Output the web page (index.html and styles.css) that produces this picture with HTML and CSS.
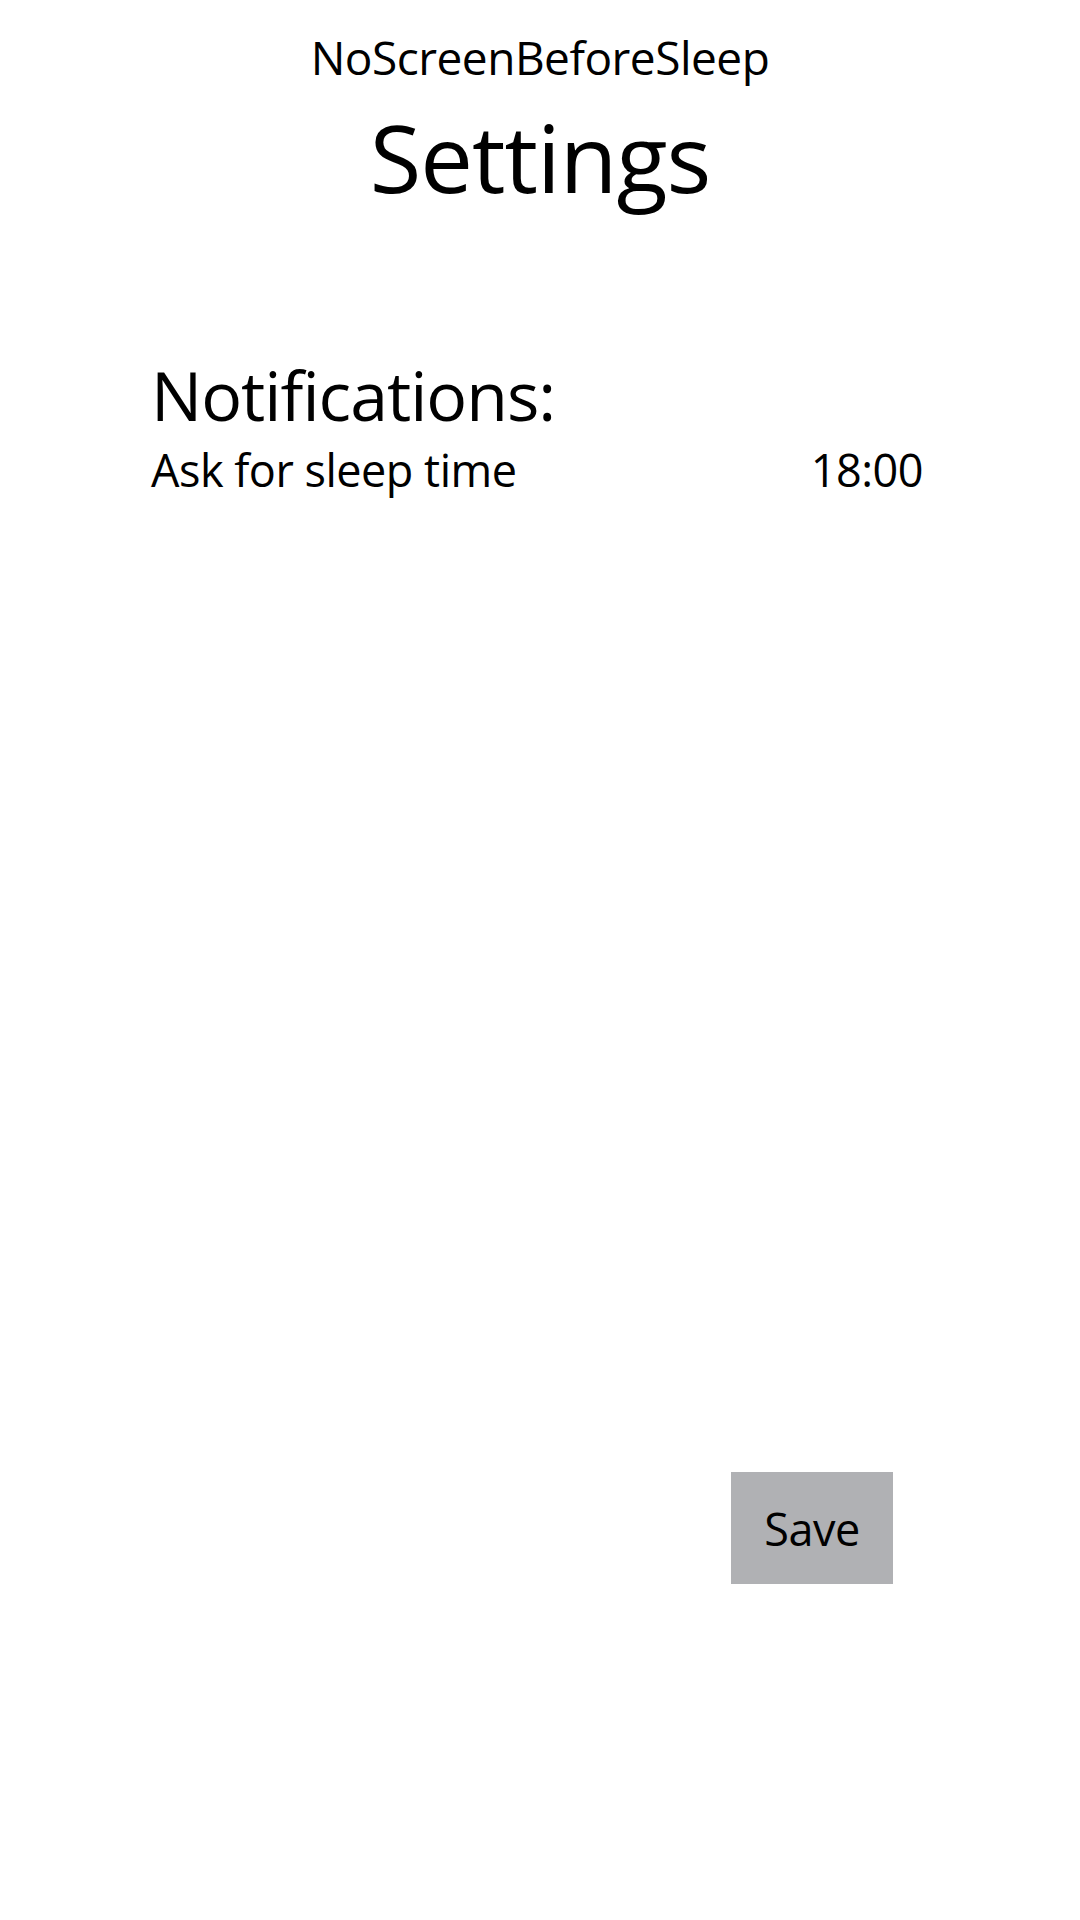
FILE: index.html
```html
<!DOCTYPE html>
<html>
<head>
<meta charset="utf-8">
<link rel="stylesheet" href="styles.css">
</head>
<body>
<div class="screen">
  <div class="app-name">NoScreenBeforeSleep</div>
  <h1 class="page-title">Settings</h1>
  <section class="settings">
    <h2 class="section-title">Notifications:</h2>
    <div class="setting-row">
      <span class="setting-label">Ask for sleep time</span>
      <span class="setting-value">18:00</span>
    </div>
  </section>
  <div class="actions">
    <button class="save-btn">Save</button>
  </div>
</div>
</body>
</html>
```
FILE: styles.css
```css
html, body {
  margin: 0;
  padding: 0;
  background: #ffffff;
}
body {
  font-family: "Open Sans", "Noto Sans", sans-serif;
  color: #000;
}
.screen {
  width: 1080px;
  height: 1920px;
  display: flex;
  flex-direction: column;
}
.app-name {
  margin-top: 34px;
  font-size: 46px;
  line-height: 1;
  text-align: center;
  letter-spacing: -0.5px;
}
.page-title {
  margin: 30px 0 0;
  font-size: 94px;
  line-height: 1;
  font-weight: 400;
  text-align: center;
  letter-spacing: -1px;
}
.settings {
  margin-top: 157px;
  padding: 0 157px 0 151px;
}
.section-title {
  margin: 0;
  font-size: 68px;
  line-height: 1;
  font-weight: 400;
  letter-spacing: -1px;
}
.setting-row {
  margin-top: 18px;
  display: flex;
  justify-content: space-between;
  align-items: baseline;
  font-size: 45px;
  line-height: 1;
  letter-spacing: -0.5px;
}
.actions {
  margin-top: 980px;
  display: flex;
  justify-content: flex-end;
  padding-right: 187px;
}
.save-btn {
  width: 162px;
  height: 112px;
  border: none;
  background: #b0b1b4;
  font-family: "Open Sans", "Noto Sans", sans-serif;
  font-size: 45px;
  letter-spacing: -0.5px;
  color: #000;
  padding: 0;
}
```
